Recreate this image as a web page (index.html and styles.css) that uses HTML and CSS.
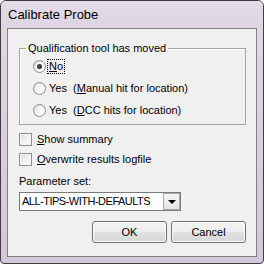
FILE: index.html
```html
<!DOCTYPE html>
<html>
<head>
<meta charset="utf-8">
<link rel="stylesheet" href="styles.css">
</head>
<body>
<div class="window">
  <div class="titlebar">Calibrate Probe</div>
  <div class="client">
    <fieldset class="group">
      <legend class="legend">Qualification tool has moved</legend>
      <div class="options">
        <div class="opt"><span class="radio checked"></span><span class="focus"><u>N</u>o</span></div>
        <div class="opt"><span class="radio"></span><span class="lbl">Yes&nbsp; (<u>M</u>anual hit for location)</span></div>
        <div class="opt"><span class="radio"></span><span class="lbl">Yes&nbsp; (<u>D</u>CC hits for location)</span></div>
      </div>
    </fieldset>
    <div class="check"><span class="box"></span><span class="clbl"><u>S</u>how summary</span></div>
    <div class="check"><span class="box"></span><span class="clbl"><u>O</u>verwrite results logfile</span></div>
    <div class="plabel">Parameter set:</div>
    <div class="combo">
      <span class="combo-text">ALL-TIPS-WITH-DEFAULTS</span>
      <span class="combo-btn"><span class="arrow"></span></span>
    </div>
    <div class="buttons">
      <div class="btn">OK</div>
      <div class="btn">Cancel</div>
    </div>
  </div>
</div>
</body>
</html>
```

FILE: styles.css
```css
html, body {
  margin: 0;
  padding: 0;
  background: #ffffff;
}
.window {
  width: 264px;
  height: 264px;
  box-sizing: border-box;
  border: 1px solid #3f3f3f;
  border-radius: 6px 6px 4px 4px;
  background: linear-gradient(#e0d9e5, #d3c7da);
  display: flex;
  flex-direction: column;
  overflow: hidden;
}
.titlebar {
  height: 27px;
  line-height: 28px;
  padding-left: 7px;
  font-family: "Liberation Sans", Arial, sans-serif;
  font-size: 13px;
  color: #000;
  background: linear-gradient(#e3dce8, #dcd4e2);
}
.client {
  margin: 0 6px 6px 6px;
  height: 227px;
  border: 1px solid #7f7f85;
  background: #f0f0f0;
  padding: 13px 10px 0 11px;
  font-family: "Liberation Sans", Arial, sans-serif;
  font-size: 11px;
  color: #000;
  display: flex;
  flex-direction: column;
}
.group {
  margin: 0;
  padding: 0 0 3px 6px;
  border: 1px solid #a3a3a3;
  box-shadow: inset 1px 1px 0 #ffffff;
  border-radius: 0;
  min-width: 0;
}
.legend {
  padding: 0 2px;
  line-height: 13px;
}
.options {
  margin-left: 7px;
  display: flex;
  flex-direction: column;
}
.opt {
  height: 22px;
  display: flex;
  align-items: center;
}
.radio {
  width: 13px;
  height: 13px;
  box-sizing: border-box;
  border-radius: 50%;
  border: 1px solid #8e8f8f;
  background: radial-gradient(circle at 65% 65%, #ffffff 0%, #f4f4f4 45%, #d6d6d6 100%);
  position: relative;
  flex: none;
}
.radio.checked::after {
  content: "";
  position: absolute;
  left: 3px;
  top: 3px;
  width: 5px;
  height: 5px;
  border-radius: 50%;
  background: radial-gradient(circle at 40% 40%, #5a5a5a, #0c0c0c);
}
.focus {
  margin-left: 2px;
  padding: 0 1px;
  line-height: 13px;
  outline: 1px dotted #000;
  outline-offset: 0;
}
.lbl {
  margin-left: 3px;
}
.check {
  height: 20px;
  display: flex;
  align-items: center;
}
.group + .check {
  margin-top: 4px;
}
.box {
  width: 13px;
  height: 13px;
  box-sizing: border-box;
  border: 1px solid #8e8f8f;
  background: linear-gradient(135deg, #dcdcdc 0%, #f2f2f2 55%, #ffffff 100%);
  box-shadow: inset 0 0 0 1px #f4f4f4;
  flex: none;
}
.clbl {
  margin-left: 5px;
}
.plabel {
  margin-top: 6px;
  line-height: 13px;
}
.combo {
  margin-top: 4px;
  width: 162px;
  height: 19px;
  box-sizing: border-box;
  border: 1px solid #7a7a7a;
  background: #ffffff;
  display: flex;
  align-items: stretch;
}
.combo-text {
  flex: 1;
  padding-left: 2px;
  line-height: 17px;
  letter-spacing: -0.5px;
}
.combo-btn {
  width: 17px;
  box-sizing: border-box;
  border: 1px solid #a8a8a8;
  background: linear-gradient(#f6f6f6, #e4e4e4);
  display: flex;
  align-items: center;
  justify-content: center;
}
.arrow {
  width: 0;
  height: 0;
  border-left: 4px solid transparent;
  border-right: 4px solid transparent;
  border-top: 4px solid #000;
}
.buttons {
  margin-top: 10px;
  display: flex;
  justify-content: flex-end;
  gap: 4px;
}
.btn {
  width: 75px;
  height: 22px;
  box-sizing: border-box;
  border: 1px solid #707070;
  border-radius: 3px;
  background: linear-gradient(#f4f4f4 0%, #ededed 50%, #e2e2e2 50%, #d6d6d6 100%);
  box-shadow: inset 0 0 0 1px #fbfbfb;
  text-align: center;
  line-height: 20px;
}
```
